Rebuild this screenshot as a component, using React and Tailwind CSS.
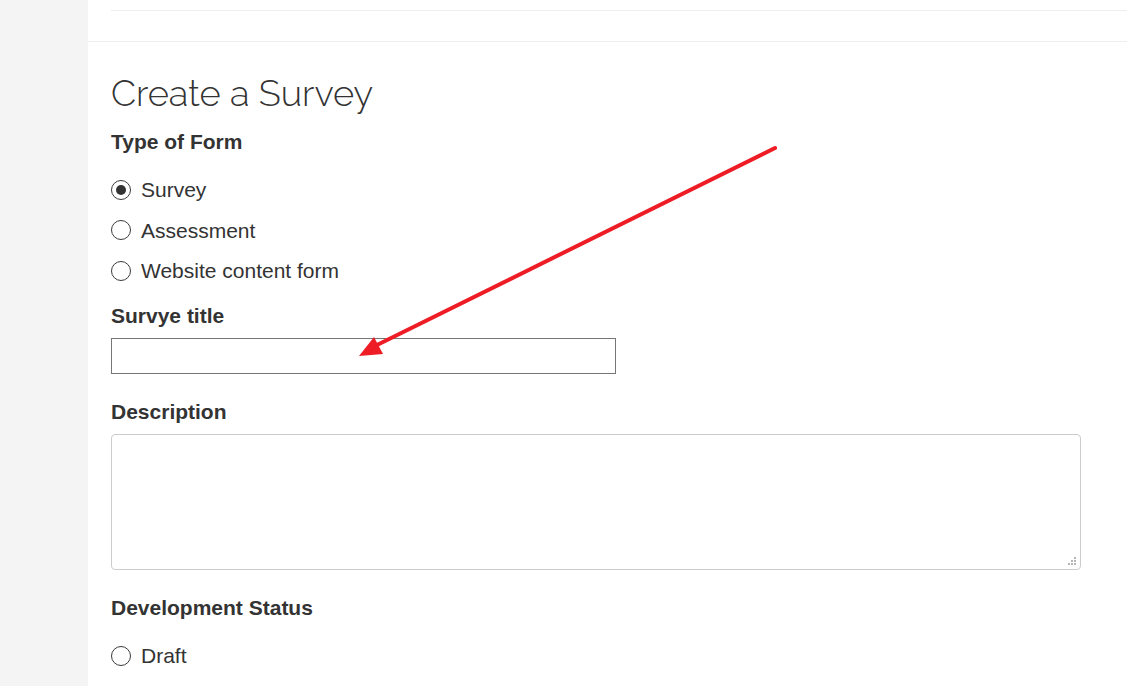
import React from 'react';

const Radio = ({ label, checked }) => (
  <label className="flex items-center h-[20px] gap-[10px]">
    <span className="w-[20px] h-[20px] rounded-full border-[1.5px] border-[#3b3b3b] flex items-center justify-center bg-white">
      {checked && <span className="w-[10px] h-[10px] rounded-full bg-[#333]" />}
    </span>
    <span className="text-[21px] text-[#333] leading-none">{label}</span>
  </label>
);

const Label = ({ children, className = '' }) => (
  <div className={`text-[21px] font-bold text-[#333] leading-none ${className}`}>{children}</div>
);

export default function App() {
  return (
    <div className="flex min-h-[686px] bg-white overflow-hidden" style={{ fontFamily: '"Liberation Sans", Arial, sans-serif' }}>
      <div className="w-[88px] shrink-0 bg-[#f4f4f4]" />
      <div className="flex-1 relative">
        <div className="h-[42px] border-b border-[#eeeeee]">
          <div className="ml-[23px] h-[11px] border-b border-[#eeeeee]" />
        </div>
        <div className="pl-[23px]">
          <h1 className="mt-[32.5px] h-[37px] text-[36.3px] font-light text-[#333] leading-[37px]" style={{ fontFamily: 'Raleway, Lato, sans-serif' }}>
            Create a Survey
          </h1>
          <Label className="mt-[19.5px]">Type of Form</Label>
          <div className="mt-[27.5px] flex flex-col gap-[20.5px]">
            <Radio label="Survey" checked />
            <Radio label="Assessment" />
            <Radio label="Website content form" />
          </div>
          <Label className="mt-[24px]">Survye title</Label>
          <div className="mt-[12.5px] w-[505px] h-[36px] border border-[#767676] bg-white" />
          <Label className="mt-[27px]">Description</Label>
          <div className="mt-[11.5px] w-[970px] h-[136px] border border-[#cccccc] rounded-[4px] relative bg-white">
            <svg className="absolute right-[3px] bottom-[3px]" width="10" height="10" viewBox="0 0 10 10">
              <rect x="7" y="1" width="2" height="2" fill="#b5b5b5" />
              <rect x="4" y="4" width="2" height="2" fill="#b5b5b5" />
              <rect x="7" y="4" width="2" height="2" fill="#b5b5b5" />
              <rect x="1" y="7" width="2" height="2" fill="#b5b5b5" />
              <rect x="4" y="7" width="2" height="2" fill="#b5b5b5" />
              <rect x="7" y="7" width="2" height="2" fill="#b5b5b5" />
            </svg>
          </div>
          <Label className="mt-[27.5px]">Development Status</Label>
          <div className="mt-[27.5px] flex flex-col gap-[20.5px]">
            <Radio label="Draft" />
          </div>
        </div>
        <svg className="absolute left-0 top-0 pointer-events-none" width="1039" height="686" viewBox="0 0 1039 686">
          <line x1="687" y1="148" x2="289" y2="345" stroke="#ee1c25" strokeWidth="4" strokeLinecap="round" />
          <polygon points="271,356 286,337 295,354" fill="#ee1c25" />
        </svg>
      </div>
    </div>
  );
}
